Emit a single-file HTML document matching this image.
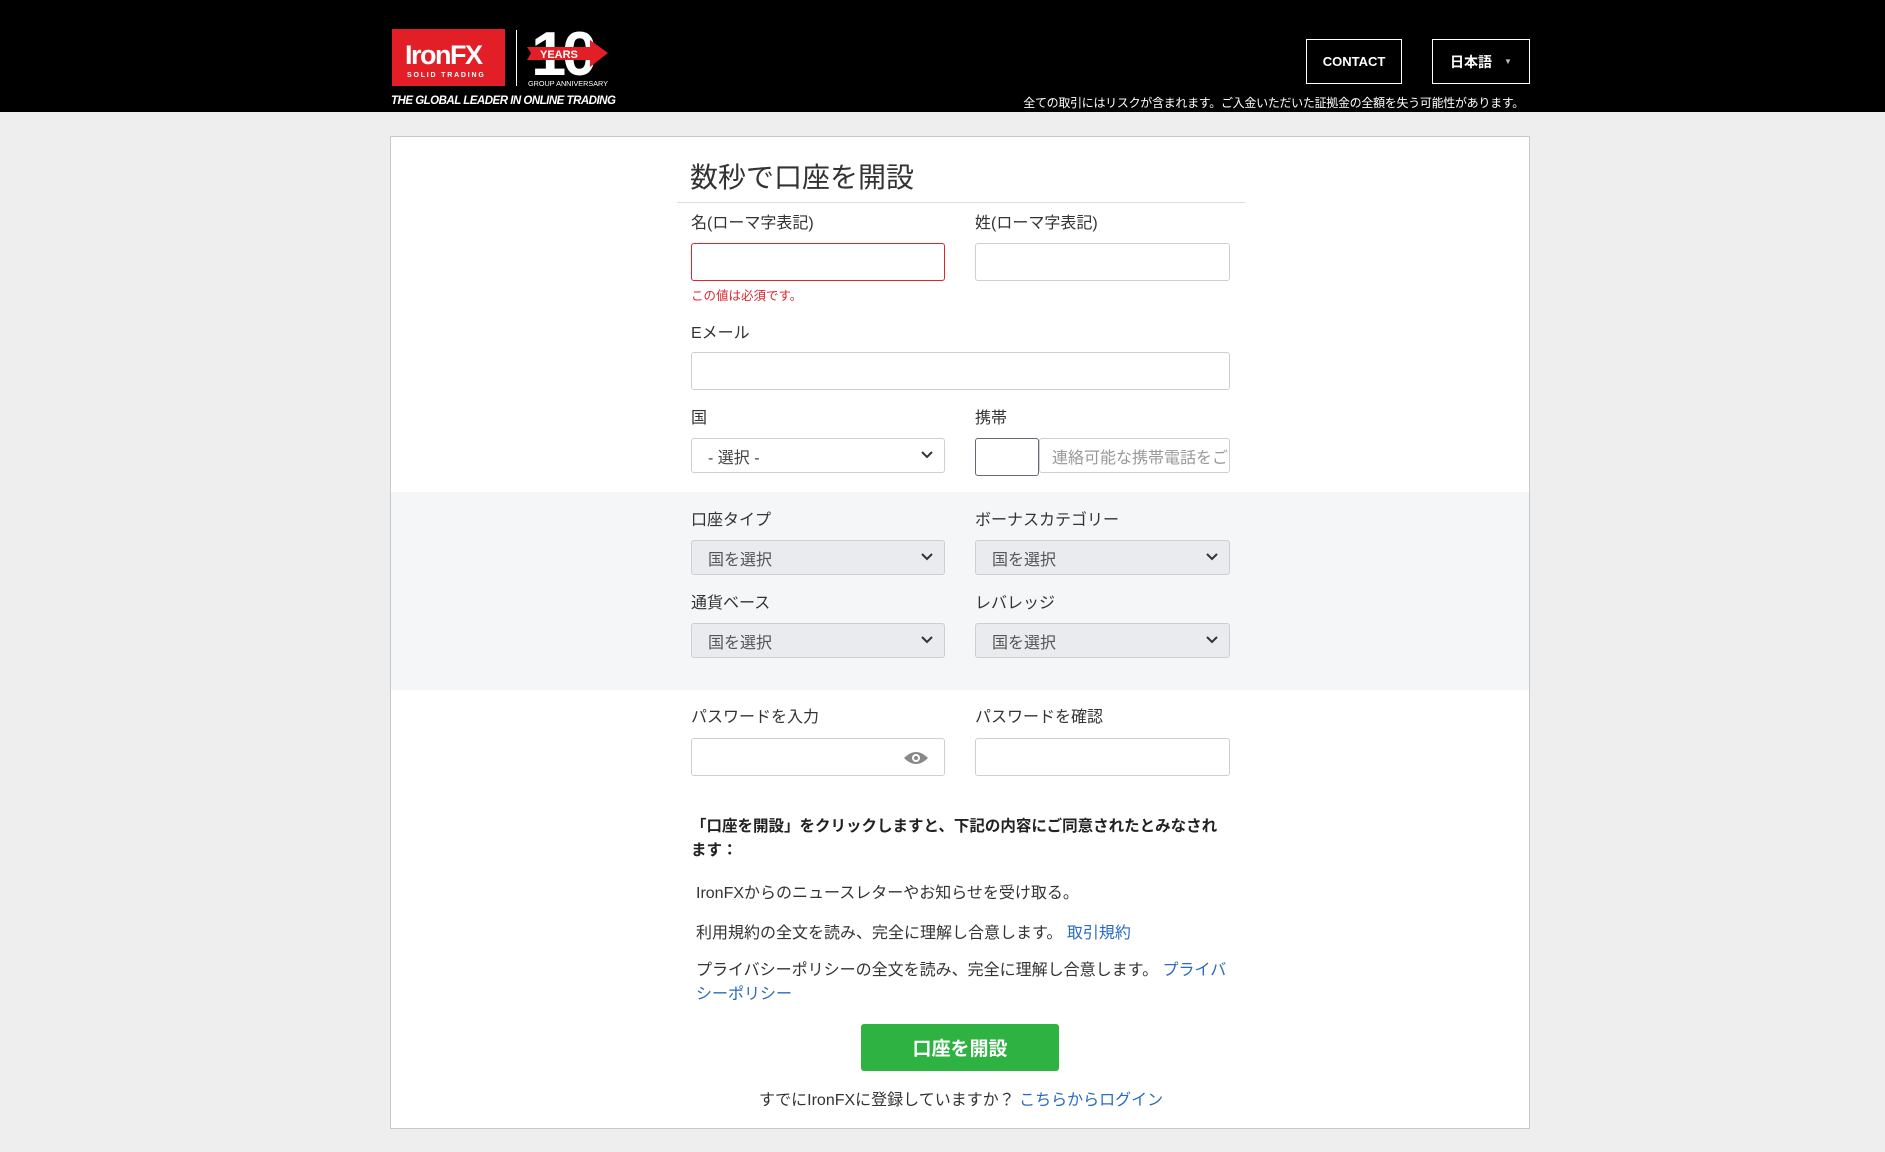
<!DOCTYPE html>
<html><head><meta charset="utf-8"><style>
*{box-sizing:border-box;margin:0;padding:0}
body{width:1885px;height:1152px;background:#eeeeee;font-family:"Liberation Sans","Noto Sans CJK JP",sans-serif;color:#333;position:relative;overflow:hidden}
.a{position:absolute}
.hdr{left:0;top:0;width:1885px;height:112px;background:#000}
.btn{border:1px solid #fff;color:#fff;font-weight:bold;font-size:13px;display:flex;align-items:center;justify-content:center}
.card{left:390px;top:136px;width:1140px;height:993px;background:#fff;border:1px solid #c8c8c8}
.lbl{font-size:16px;color:#333;white-space:nowrap}
.inp{height:38px;border:1px solid #ccd0d5;border-radius:3px;background:#fff}
.sel{height:35px;border:1px solid #ccd0d5;border-radius:3px;background:#fff;font-size:16px;color:#444;padding-left:16px;display:flex;align-items:center}
.g{background:#e9ebee;color:#555}
.chev{position:absolute;right:10px;top:11px}
.p{font-size:16px;color:#333;white-space:nowrap}
a{color:#2a6bbf;text-decoration:none}
</style></head><body>
<div class="a hdr"></div>
<!-- logo -->
<div class="a" style="left:392px;top:29px;width:113px;height:57px;background:#e21f26"></div>
<div class="a" style="left:405px;top:40px;color:#fff;font-weight:bold;font-size:27px;letter-spacing:-1.5px">IronFX</div>
<div class="a" style="left:407px;top:72px;color:#fff;font-weight:bold;font-size:7px;letter-spacing:1.8px">SOLID TRADING</div>
<div class="a" style="left:516px;top:30px;width:1px;height:56px;background:#fff"></div>
<svg class="a" style="left:515px;top:25px" width="100" height="65">
<text x="14" y="50" transform="scale(1.15 1)" font-family="Liberation Sans" font-weight="bold" font-size="62" fill="#fff" letter-spacing="-4" textLength="54" lengthAdjust="spacingAndGlyphs">10</text>
<rect x="0" y="0" width="0" height="0"/>
<polygon points="12,22 75,22 75,15 93,28 75,42 75,35 12,35 16,28" fill="#e21f26"/>
<rect x="46" y="5" width="10" height="17" fill="none"/>
<text x="25" y="33" font-family="Liberation Sans" font-weight="bold" font-size="11" fill="#fff">YEARS</text>
<text x="13" y="61" font-family="Liberation Sans" font-size="7.5" fill="#fff" textLength="80" lengthAdjust="spacingAndGlyphs">GROUP ANNIVERSARY</text>
</svg>
<div class="a" style="left:391px;top:95px;color:#fff;font-style:italic;font-weight:bold;font-size:11.5px;letter-spacing:-0.5px">THE GLOBAL LEADER IN ONLINE TRADING</div>
<div class="a btn" style="left:1306px;top:39px;width:96px;height:45px;">CONTACT</div>
<div class="a btn" style="left:1432px;top:39px;width:98px;height:45px;font-size:14px">日本語 <span style="font-size:8px;margin-left:12px;color:#bbb">▼</span></div>
<div class="a" style="right:361px;top:94px;color:#fff;font-size:12px;white-space:nowrap;letter-spacing:-0.3px">全ての取引にはリスクが含まれます。ご入金いただいた証拠金の全額を失う可能性があります。</div>

<div class="a card"></div>
<div class="a" style="left:391px;top:492px;width:1138px;height:198px;background:#f5f6f8"></div>
<div class="a" style="left:690px;top:156px;font-size:28px;color:#333">数秒で口座を開設</div>
<div class="a" style="left:677px;top:202px;width:568px;height:1px;background:#ddd"></div>

<div class="a lbl" style="left:691px;top:209px">名(ローマ字表記)</div>
<div class="a lbl" style="left:975px;top:209px">姓(ローマ字表記)</div>
<div class="a inp" style="left:691px;top:243px;width:254px;border-color:#e0262c"></div>
<div class="a inp" style="left:975px;top:243px;width:255px"></div>
<div class="a" style="left:691px;top:285px;font-size:12.5px;color:#e0262c">この値は必須です。</div>

<div class="a lbl" style="left:691px;top:319px">Eメール</div>
<div class="a inp" style="left:691px;top:352px;width:539px"></div>

<div class="a lbl" style="left:691px;top:404px">国</div>
<div class="a lbl" style="left:975px;top:404px">携帯</div>
<div class="a sel" style="left:691px;top:438px;width:254px">- 選択 -<svg class="chev" width="14" height="10"><path d="M2 2 L7 7 L12 2" stroke="#333" stroke-width="2" fill="none"/></svg></div>
<div class="a inp" style="left:975px;top:438px;width:64px;border-color:#666a75"></div>
<div class="a sel" style="left:1039px;top:438px;width:191px;color:#999;padding-left:12px;overflow:hidden;white-space:nowrap">連絡可能な携帯電話をご</div>

<div class="a lbl" style="left:691px;top:506px">口座タイプ</div>
<div class="a lbl" style="left:975px;top:506px">ボーナスカテゴリー</div>
<div class="a sel g" style="left:691px;top:540px;width:254px">国を選択<svg class="chev" width="14" height="10"><path d="M2 2 L7 7 L12 2" stroke="#333" stroke-width="2" fill="none"/></svg></div>
<div class="a sel g" style="left:975px;top:540px;width:255px">国を選択<svg class="chev" width="14" height="10"><path d="M2 2 L7 7 L12 2" stroke="#333" stroke-width="2" fill="none"/></svg></div>
<div class="a lbl" style="left:691px;top:589px">通貨ベース</div>
<div class="a lbl" style="left:975px;top:589px">レバレッジ</div>
<div class="a sel g" style="left:691px;top:623px;width:254px">国を選択<svg class="chev" width="14" height="10"><path d="M2 2 L7 7 L12 2" stroke="#333" stroke-width="2" fill="none"/></svg></div>
<div class="a sel g" style="left:975px;top:623px;width:255px">国を選択<svg class="chev" width="14" height="10"><path d="M2 2 L7 7 L12 2" stroke="#333" stroke-width="2" fill="none"/></svg></div>

<div class="a lbl" style="left:691px;top:703px">パスワードを入力</div>
<div class="a lbl" style="left:975px;top:703px">パスワードを確認</div>
<div class="a inp" style="left:691px;top:738px;width:254px"><svg style="position:absolute;left:211px;top:11px" width="26" height="16"><path d="M1 8 Q13 -4 25 8 Q13 20 1 8Z" fill="#888"/><circle cx="13" cy="8" r="4" fill="#fff"/><circle cx="13" cy="8" r="2" fill="#888"/></svg></div>
<div class="a inp" style="left:975px;top:738px;width:255px"></div>

<div class="a" style="left:691px;top:815px;width:528px;font-size:15.5px;font-weight:bold;color:#222;line-height:24px">「口座を開設」をクリックしますと、下記の内容にご同意されたとみなされます：</div>
<div class="a p" style="left:696px;top:879px">IronFXからのニュースレターやお知らせを受け取る。</div>
<div class="a p" style="left:696px;top:919px">利用規約の全文を読み、完全に理解し合意します。 <a>取引規約</a></div>
<div class="a p" style="left:696px;top:959px;width:535px;white-space:normal;line-height:24px">プライバシーポリシーの全文を読み、完全に理解し合意します。 <a>プライバシーポリシー</a></div>
<div class="a" style="left:861px;top:1024px;width:198px;height:47px;background:#2eb343;border-radius:3px;color:#fff;font-weight:bold;font-size:19px;display:flex;align-items:center;justify-content:center">口座を開設</div>
<div class="a p" style="left:759px;top:1086px">すでにIronFXに登録していますか？ <a>こちらからログイン</a></div>
</body></html>
